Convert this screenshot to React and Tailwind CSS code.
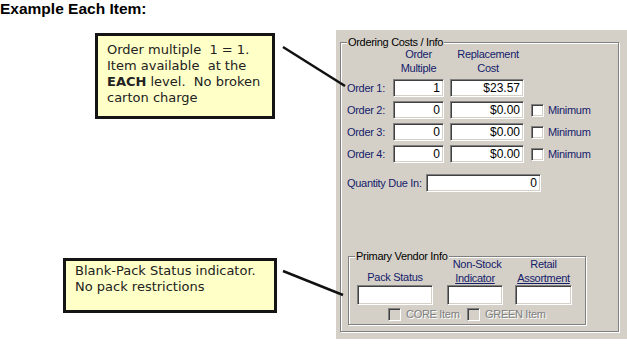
const orders = [
  { label: "Order 1:", multiple: "1", cost: "$23.57", minimum: false },
  { label: "Order 2:", multiple: "0", cost: "$0.00", minimum: true },
  { label: "Order 3:", multiple: "0", cost: "$0.00", minimum: true },
  { label: "Order 4:", multiple: "0", cost: "$0.00", minimum: true },
];

const SunkenBox = ({ className = "", children }) => (
  <div
    className={`bg-white border-t border-l border-t-[#808080] border-l-[#808080] border-b border-r border-b-white border-r-white shadow-[inset_1px_1px_0_#404040,inset_-1px_-1px_0_#d4d0c8] flex items-center justify-end pr-[3px] text-[12px] text-black leading-none tracking-normal ${className}`}
  >
    {children}
  </div>
);

const CheckBox = ({ disabled }) => (
  <div
    className={`w-[13px] h-[13px] shrink-0 border-t border-l border-t-[#808080] border-l-[#808080] border-b border-r border-b-white border-r-white shadow-[inset_1px_1px_0_#404040,inset_-1px_-1px_0_#d4d0c8] ${
      disabled ? "bg-[#d4d0c8]" : "bg-white"
    }`}
  />
);

const GroupBox = ({ title, className = "", children }) => (
  <div
    className={`relative border border-[#808080] shadow-[inset_1px_1px_0_#fff,1px_1px_0_#fff] ${className}`}
  >
    <span className="absolute left-[6px] -top-[8px] px-[1px] bg-[#d4d0c8] text-[11px] leading-[14px] text-black whitespace-nowrap">
      {title}
    </span>
    {children}
  </div>
);

const Callout = ({ className = "", children }) => (
  <div
    className={`bg-[#ffffc8] border-[3px] border-[#141414] pl-[9px] text-[13px] leading-[16px] text-[#222] font-['DejaVu_Sans',sans-serif] whitespace-nowrap ${className}`}
  >
    {children}
  </div>
);

export default function App() {
  return (
    <div className="relative w-[627px] h-[344px] bg-white overflow-hidden font-['Liberation_Sans',Arial,sans-serif]">
      {/* Title */}
      <div className="h-[30px] text-[15.5px] leading-[17px] font-bold text-black">
        Example Each Item:
      </div>

      <div className="flex">
        {/* Callouts */}
        <div className="w-[336px] flex flex-col">
          <Callout className="ml-[95px] mt-[3px] w-[180px] h-[86px] pt-[6px]">
            <div>Order multiple&nbsp; 1 = 1.</div>
            <div>Item available&nbsp; at the</div>
            <div>
              <b>EACH</b> level.&nbsp; No broken
            </div>
            <div>carton charge</div>
          </Callout>
          <Callout className="ml-[63px] mt-[139px] w-[214px] h-[55px] pt-[2px]">
            <div>Blank-Pack Status indicator.</div>
            <div>No pack restrictions</div>
          </Callout>
        </div>

        {/* Form panel */}
        <div className="w-[291px] h-[309px] bg-[#d4d0c8] pl-[4px] pt-[12px] tracking-[-0.3px]">
          <GroupBox
            title="Ordering Costs / Info"
            className="w-[279px] h-[290px] pt-[4px] pl-[6px]"
          >
            {/* Column headers */}
            <div className="flex text-[11px] leading-[14px] text-[#14206a]">
              <div className="w-[46px]" />
              <div className="w-[51px] text-center">
                Order
                <br />
                Multiple
              </div>
              <div className="w-[7px]" />
              <div className="w-[74px] text-center">
                Replacement
                <br />
                Cost
              </div>
            </div>

            {/* Order rows */}
            <div className="mt-[4px] flex flex-col gap-[4px]">
              {orders.map((o) => (
                <div key={o.label} className="flex items-center h-[18px]">
                  <div className="w-[46px] text-[11px] text-[#14206a] whitespace-nowrap">
                    {o.label}
                  </div>
                  <SunkenBox className="w-[51px] h-[18px]">{o.multiple}</SunkenBox>
                  <SunkenBox className="ml-[6px] w-[74px] h-[18px]">{o.cost}</SunkenBox>
                  {o.minimum && (
                    <div className="ml-[7px] flex items-center gap-[4px]">
                      <CheckBox />
                      <span className="text-[11px] text-[#14206a]">Minimum</span>
                    </div>
                  )}
                </div>
              ))}
            </div>

            {/* Quantity due in */}
            <div className="mt-[11px] flex items-center h-[18px]">
              <div className="w-[79px] text-[11px] text-[#14206a] whitespace-nowrap">
                Quantity Due In:
              </div>
              <SunkenBox className="w-[115px] h-[18px]">0</SunkenBox>
            </div>

            {/* Primary vendor info */}
            <GroupBox
              title="Primary Vendor Info"
              className="mt-[64px] ml-[1px] w-[238px] h-[69px]"
            >
              <div className="flex items-end pl-[8px] text-[11px] leading-[14px] text-[#14206a] whitespace-nowrap">
                <div className="w-[76px] flex flex-col items-center">
                  <span>Pack Status</span>
                  <SunkenBox className="mt-[1px] w-[76px] h-[20px]" />
                </div>
                <div className="ml-[14px] w-[56px] flex flex-col items-center">
                  <span className="pl-[4px]">Non-Stock</span>
                  <span className="underline">Indicator</span>
                  <SunkenBox className="w-[56px] h-[20px]" />
                </div>
                <div className="ml-[12px] w-[57px] flex flex-col items-center">
                  <span>Retail</span>
                  <span className="underline">Assortment</span>
                  <SunkenBox className="w-[57px] h-[20px]" />
                </div>
              </div>
              <div className="mt-[3px] pl-[39px] flex items-center h-[13px] text-[11px] text-[#808080] [text-shadow:1px_1px_0_#fff] whitespace-nowrap">
                <div className="w-[79px] flex items-center gap-[5px]">
                  <CheckBox disabled />
                  <span>CORE Item</span>
                </div>
                <div className="flex items-center gap-[5px]">
                  <CheckBox disabled />
                  <span>GREEN Item</span>
                </div>
              </div>
            </GroupBox>
          </GroupBox>
        </div>
      </div>

      {/* Connector lines */}
      <svg
        className="absolute inset-0 pointer-events-none"
        width="627"
        height="344"
        viewBox="0 0 627 344"
      >
        <line x1="283" y1="47" x2="345" y2="86" stroke="#111" strokeWidth="2.5" />
        <line x1="283" y1="271" x2="343" y2="295" stroke="#111" strokeWidth="2.5" />
      </svg>
    </div>
  );
}
